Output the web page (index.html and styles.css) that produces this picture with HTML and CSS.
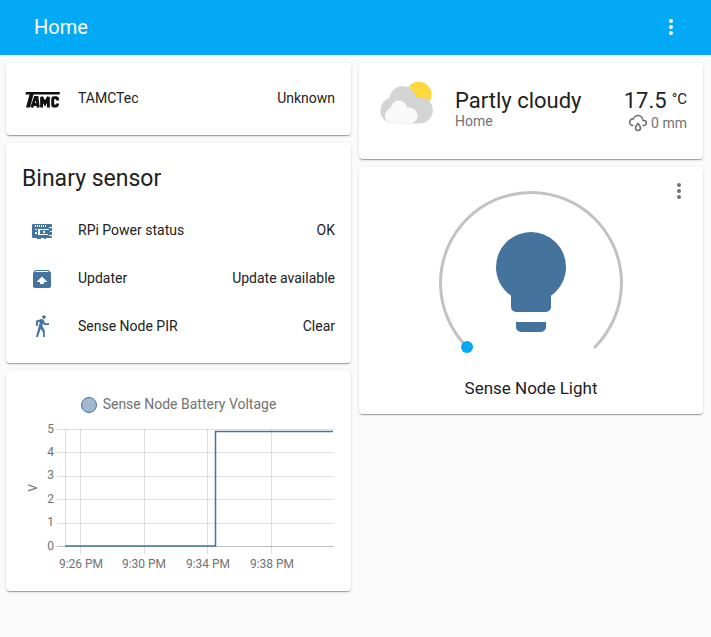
FILE: index.html
```html
<!DOCTYPE html>
<html lang="en">
<head>
<meta charset="utf-8">
<meta name="viewport" content="width=device-width, initial-scale=1">
<title>Home</title>
<link rel="stylesheet" href="styles.css">
</head>
<body>
<header class="toolbar">
  <h1 class="toolbar-title">Home</h1>
  <button class="icon-button" type="button" aria-label="Open menu">
    <svg class="icon" viewBox="0 0 24 24"><path d="M12,16A2,2 0 0,1 14,18A2,2 0 0,1 12,20A2,2 0 0,1 10,18A2,2 0 0,1 12,16M12,10A2,2 0 0,1 14,12A2,2 0 0,1 12,14A2,2 0 0,1 10,12A2,2 0 0,1 12,10M12,4A2,2 0 0,1 14,6A2,2 0 0,1 12,8A2,2 0 0,1 10,6A2,2 0 0,1 12,4Z"/></svg>
  </button>
</header>

<main class="view">
  <div class="column">
    <section class="card entities">
      <div class="row">
        <span class="badge">
          <svg class="logo" viewBox="0 0 40 40" role="img" aria-label="TAMC">
            <path d="M4 13H38L37.500 15.500H11.500L8 28.500H4L7.500 15.500H3.500Z"/>
            <g fill="none" stroke="#111" stroke-width="2.900">
              <path d="M9.800 28.500L13.300 18.500H15L16.300 28.500M11.500 25.500H16"/>
              <path d="M19.600 28.500V18L23 24.500L26.400 18V28.500"/>
              <path d="M35.500 21.500V20Q35.500 18.700 34 18.700H32Q30.700 18.700 30.700 20.200V25.500Q30.700 27 32 27H33.700Q35.200 27 35.500 25.500V24.500"/>
            </g>
          </svg>
        </span>
        <span class="name">TAMCTec</span>
        <span class="value">Unknown</span>
      </div>
    </section>

    <section class="card sensors">
      <h2 class="card-title">Binary sensor</h2>
      <div class="rows">
        <div class="row">
          <span class="badge"><svg class="icon" viewBox="0 0 24 24"><path fill-rule="evenodd" d="M3 5H21A1 1 0 0 1 22 6V8H19V9H22V12H20V13H22V16H19V17H22V18A1 1 0 0 1 21 19H16V20H14V19H11V20H7V19H3A1 1 0 0 1 2 18V6A1 1 0 0 1 3 5M5 6V8H6V6M7 6V8H8V6M9 6V8H10V6M11 6V8H12V6M13 6V8H14V6M15 6V8H16V6M5 10V11H7V10M5 13V15H7V13M8 10V16H18V15H10V11H19V10M13 12H15V14H13Z"/></svg></span>
          <span class="name">RPi Power status</span>
          <span class="value">OK</span>
        </div>
        <div class="row">
          <span class="badge"><svg class="icon" viewBox="0 0 24 24"><path d="M20.54,5.23C20.83,5.57 21,6 21,6.5V19A2,2 0 0,1 19,21H5A2,2 0 0,1 3,19V6.5C3,6 3.17,5.57 3.46,5.23L4.84,3.55C5.12,3.21 5.53,3 6,3H18C18.47,3 18.88,3.21 19.15,3.55L20.54,5.23M5.12,5H18.87L17.93,4H5.93L5.12,5M12,9.5L6.5,15H10V17H14V15H17.5L12,9.5Z"/></svg></span>
          <span class="name">Updater</span>
          <span class="value">Update available</span>
        </div>
        <div class="row">
          <span class="badge"><svg class="icon" viewBox="0 0 24 24"><path d="M14.12,10H19V8.2H15.38L13.38,4.87C13.08,4.37 12.54,4.03 11.92,4.03C11.74,4.03 11.58,4.06 11.42,4.11L6,5.8V11H7.8V7.33L9.91,6.67L6,22H7.8L10.67,13.89L13,17V22H14.8V15.59L12.31,11.05L13.04,8.18M14,3.8C15,3.8 15.8,3 15.8,2C15.8,1 15,0.2 14,0.2C13,0.2 12.2,1 12.2,2C12.2,3 13,3.8 14,3.8Z"/></svg></span>
          <span class="name">Sense Node PIR</span>
          <span class="value">Clear</span>
        </div>
      </div>
    </section>

    <section class="card history">
      <div class="legend"><span class="bullet"></span><span class="legend-label">Sense Node Battery Voltage</span></div>
      <svg class="chart" viewBox="0 0 313 156" role="img" aria-label="Sense Node Battery Voltage in volts">
        <path class="grid" d="M35 10.500H312M35 33.500H312M35 57.500H312M35 80.500H312M35 104.500H312M43.500 10V127M58.500 10V135M122.500 10V135M185.500 10V135M249.500 10V135"/>
        <path class="zero" d="M35 127.500H312"/>
        <path class="line" d="M43 127H193.500V12.500H311"/>
        <g class="ticks-y">
          <text x="32" y="14">5</text>
          <text x="32" y="37">4</text>
          <text x="32" y="60">3</text>
          <text x="32" y="84">2</text>
          <text x="32" y="107">1</text>
          <text x="32" y="131">0</text>
        </g>
        <g class="ticks-x">
          <text x="59" y="149">9:26 PM</text>
          <text x="122" y="149">9:30 PM</text>
          <text x="186" y="149">9:34 PM</text>
          <text x="250" y="149">9:38 PM</text>
          <text transform="translate(15 69) rotate(-90)">V</text>
        </g>
      </svg>
    </section>
  </div>

  <div class="column">
    <section class="card weather">
      <svg class="weather-icon" viewBox="0 0 17 17" role="img" aria-label="Partly cloudy">
        <circle fill="#fdd93c" cx="11.600" cy="4.150" r="3.400"/>
        <path fill="#d4d4d4" d="m3.8863 5.035c-0.54892 0.16898-1.04 0.46637-1.4372 0.8636-0.63077 0.63041-1.0206 1.4933-1.0206 2.455 0 1.9251 1.5589 3.4682 3.4837 3.4682h6.9688c1.9251 0 3.484-1.5981 3.484-3.5232 0-1.9251-1.5589-3.5232-3.484-3.5232h-1.0834c-0.25294-1.6916-1.6986-2.9083-3.4463-2.9083-1.7995 0-3.2805 1.4153-3.465 3.1679"/>
        <path fill="#f9f9f9" d="m4.1996 7.6995c-0.33902 0.10407-0.64276 0.28787-0.88794 0.5334-0.39017 0.38982-0.63147 0.92322-0.63147 1.5176 0 1.1896 0.96414 2.1431 2.1537 2.1431h4.3071c1.1896 0 2.153-0.98742 2.153-2.1777 0-1.1896-0.96344-2.1777-2.153-2.1777h-0.66992c-0.15593-1.0449-1.0499-1.7974-2.1297-1.7974-1.112 0-2.0274 0.87524-2.1417 1.9586"/>
      </svg>
      <div class="weather-info">
        <div class="headline">Partly cloudy</div>
        <div class="detail">Home</div>
      </div>
      <div class="weather-values">
        <div class="headline temperature">17.5<span class="unit">°C</span></div>
        <div class="detail rain">
          <svg class="rain-icon" viewBox="0 0 24 24"><path d="M6,14.03A1,1 0 0,1 7,15.03C7,15.58 6.55,16.03 6,16.03C3.24,16.03 1,13.79 1,11.03C1,8.27 3.24,6.03 6,6.03C7,3.68 9.3,2.03 12,2.03C15.43,2.03 18.24,4.69 18.5,8.06L19,8.03A4,4 0 0,1 23,12.03C23,14.23 21.21,16.03 19,16.03H18C17.45,16.03 17,15.58 17,15.03C17,14.47 17.45,14.03 18,14.03H19A2,2 0 0,0 21,12.03A2,2 0 0,0 19,10.03H17V9.03C17,6.27 14.76,4.03 12,4.03C9.5,4.03 7.45,5.84 7.06,8.21C6.73,8.09 6.37,8.03 6,8.03A3,3 0 0,0 3,11.03A3,3 0 0,0 6,14.03M12,14.15C12.18,14.39 12.37,14.66 12.56,14.94C13,15.56 14,17.03 14,18C14,19.11 13.1,20 12,20A2,2 0 0,1 10,18C10,17.03 11,15.56 11.44,14.94C11.63,14.66 11.82,14.4 12,14.15M12,11.03L11.5,11.59C11.5,11.59 10.65,12.55 9.79,13.81C8.93,15.06 8,16.56 8,18A4,4 0 0,0 12,22A4,4 0 0,0 16,18C16,16.56 15.07,15.06 14.21,13.81C13.35,12.55 12.5,11.59 12.5,11.59"/></svg>
          <span>0 mm</span>
        </div>
      </div>
    </section>

    <section class="card light">
      <button class="icon-button more" type="button" aria-label="Show more information">
        <svg class="icon" viewBox="0 0 24 24"><path d="M12,16A2,2 0 0,1 14,18A2,2 0 0,1 12,20A2,2 0 0,1 10,18A2,2 0 0,1 12,16M12,10A2,2 0 0,1 14,12A2,2 0 0,1 12,14A2,2 0 0,1 10,12A2,2 0 0,1 12,10M12,4A2,2 0 0,1 14,6A2,2 0 0,1 12,8A2,2 0 0,1 10,6A2,2 0 0,1 12,4Z"/></svg>
      </button>
      <svg class="dial" viewBox="0 0 200 170" role="img" aria-label="Brightness">
        <path class="dial-track" d="M36 164A90.500 90.500 0 1 1 164 164"/>
        <circle class="dial-handle" cx="36" cy="164" r="6"/>
        <path class="bulb" transform="translate(40 39) scale(5)" d="M12,2A7,7 0 0,0 5,9C5,11.38 6.19,13.47 8,14.74V17A1,1 0 0,0 9,18H15A1,1 0 0,0 16,17V14.740C17.81,13.47 19,11.38 19,9A7,7 0 0,0 12,2M9,21A1,1 0 0,0 10,22H14A1,1 0 0,0 15,21V20H9V21Z"/>
      </svg>
      <div class="light-name">Sense Node Light</div>
    </section>
  </div>
</main>
</body>
</html>
```

FILE: styles.css
```css
* {
  box-sizing: border-box;
}

body {
  margin: 0;
  min-height: 100vh;
  background: #fafafa;
  color: #212121;
  font: 14px/20px Roboto, sans-serif;
}

h1,
h2 {
  margin: 0;
  font-weight: 400;
}

svg {
  display: block;
}

.toolbar {
  display: flex;
  align-items: center;
  justify-content: space-between;
  height: 55px;
  padding: 0 16px 2px 34px;
  background: #03a9f4;
  color: #fff;
}

.toolbar-title {
  font-size: 20px;
  line-height: 24px;
}

.icon {
  width: 24px;
  height: 24px;
  fill: currentColor;
}

.icon-button {
  display: grid;
  place-items: center;
  width: 48px;
  height: 48px;
  padding: 0;
  border: 0;
  background: none;
  color: inherit;
}

.view {
  display: grid;
  grid-template-columns: 345fr 344fr;
  align-items: start;
  gap: 8px;
  padding: 8px 8px 8px 6px;
}

.column {
  display: grid;
  gap: 8px;
}

.card {
  border-radius: 4px;
  background: #fff;
  box-shadow: 0 2px 1px -1px rgba(0, 0, 0, 0.2), 0 1px 1px 0 rgba(0, 0, 0, 0.14), 0 1px 3px 0 rgba(0, 0, 0, 0.12);
}

.entities {
  padding: 16px;
}

.sensors {
  padding: 12px 16px 16px;
}

.card-title {
  margin-bottom: 8px;
  font-size: 23px;
  line-height: 48px;
}

.rows {
  display: grid;
  gap: 8px;
}

.row {
  display: flex;
  align-items: center;
  height: 40px;
}

.badge {
  display: grid;
  place-items: center;
  width: 40px;
  height: 40px;
  color: #44739e;
}

.logo {
  width: 40px;
  height: 40px;
  fill: #111;
}

.name {
  flex: 1;
  margin-left: 16px;
}

.name,
.value,
.legend-label {
  padding-bottom: 2px;
}

.history {
  padding: 24px 16px 16px;
}

.legend {
  display: flex;
  align-items: center;
  justify-content: center;
  gap: 6px;
  height: 20px;
  margin-bottom: 4px;
  color: #727272;
}

.bullet {
  width: 16px;
  height: 16px;
  border: 1px solid #44739e;
  border-radius: 50%;
  background: #a1b9ce;
}

.chart {
  width: 100%;
}

.grid,
.zero {
  fill: none;
  stroke: rgba(0, 0, 0, 0.13);
}

.zero {
  stroke: rgba(0, 0, 0, 0.25);
}

.line {
  fill: none;
  stroke: #44739e;
  stroke-width: 1.5;
}

.ticks-x,
.ticks-y {
  fill: #727272;
  font-size: 12px;
  text-anchor: middle;
}

.ticks-y {
  text-anchor: end;
}

.weather {
  display: flex;
  align-items: flex-start;
  padding: 16px;
}

.weather-icon {
  width: 64px;
  height: 64px;
}

.weather-info {
  flex: 1;
  margin: 10px 0 0 16px;
}

.headline {
  font-size: 22px;
  line-height: 24px;
}

.detail {
  color: #727272;
  line-height: 16px;
}

.weather-values {
  margin-top: 10px;
}

.temperature {
  display: flex;
  justify-content: flex-end;
  gap: 5px;
}

.unit {
  font-size: 15px;
  line-height: 20px;
}

.rain {
  display: flex;
  align-items: center;
  justify-content: flex-end;
  gap: 3px;
  height: 20px;
}

.rain-icon {
  width: 20px;
  height: 20px;
  fill: #727272;
}

.light {
  position: relative;
  display: grid;
  justify-items: center;
  padding: 16px 16px 14px;
}

.more {
  position: absolute;
  top: 0;
  right: 0;
  color: #727272;
}

.dial {
  width: 200px;
  max-width: 100%;
}

.dial-track {
  fill: none;
  stroke: #c2c2c2;
  stroke-width: 3;
  stroke-linecap: round;
}

.dial-handle {
  fill: #03a9f4;
}

.bulb {
  fill: #44739e;
}

.light-name {
  margin-top: 24px;
  font-size: 17px;
  line-height: 23px;
}
```
